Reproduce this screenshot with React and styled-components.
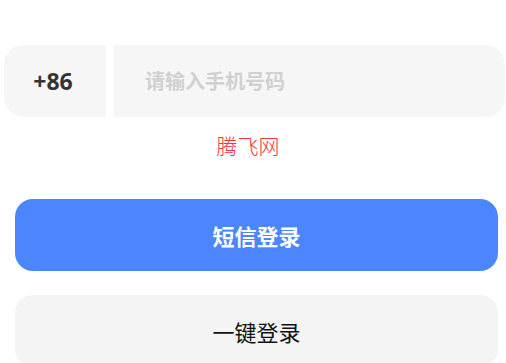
import React from 'react';
import styled, { createGlobalStyle } from 'styled-components';

const GlobalStyle = createGlobalStyle`
  html, body {
    margin: 0;
    padding: 0;
    background: #fff;
    font-family: "Noto Sans", "Noto Sans CJK SC", sans-serif;
  }
`;

const Page = styled.div`
  width: 506px;
  height: 363px;
  overflow: hidden;
  padding-top: 45px;
  box-sizing: border-box;
`;

const PhoneRow = styled.div`
  display: flex;
  gap: 8px;
  height: 72px;
  margin: 0 1px 0 4px;
`;

const AreaCode = styled.div`
  width: 102px;
  flex-shrink: 0;
  background: #f6f6f6;
  border-radius: 20px 0 0 20px;
  display: flex;
  align-items: center;
  justify-content: center;
  padding-right: 4px;
  box-sizing: border-box;
  font-size: 23px;
  font-weight: 700;
  color: #333;
`;

const PhoneInput = styled.input`
  flex: 1;
  min-width: 0;
  border: none;
  outline: none;
  background: #f6f6f6;
  border-radius: 0 20px 20px 0;
  padding: 0 0 0 31px;
  font-family: inherit;
  font-size: 20px;
  font-weight: 700;
  color: #333;

  &::placeholder {
    color: #d0d0d0;
  }
`;

const Brand = styled.div`
  margin-top: 13px;
  line-height: 30px;
  text-align: center;
  padding-right: 10px;
  font-family: "Noto Sans CJK SC", sans-serif;
  font-size: 21px;
  font-weight: 300;
  color: #f5333f;
`;

const Button = styled.button`
  display: flex;
  align-items: center;
  justify-content: center;
  width: 483px;
  height: 72px;
  margin: ${p => p.$top}px 0 0 15px;
  border: none;
  border-radius: 18px;
  font-family: "Noto Sans CJK SC", sans-serif;
  font-size: 22px;
  font-weight: ${p => (p.$primary ? 700 : 400)};
  color: ${p => (p.$primary ? '#fff' : '#111')};
  background: ${p => (p.$primary ? '#4b86ff' : '#f4f4f4')};
`;

export default function App() {
  return (
    <>
      <GlobalStyle />
      <Page>
        <PhoneRow>
          <AreaCode>+86</AreaCode>
          <PhoneInput placeholder="请输入手机号码" />
        </PhoneRow>
        <Brand>腾飞网</Brand>
        <Button $primary $top={39}>短信登录</Button>
        <Button $top={24}>一键登录</Button>
      </Page>
    </>
  );
}
